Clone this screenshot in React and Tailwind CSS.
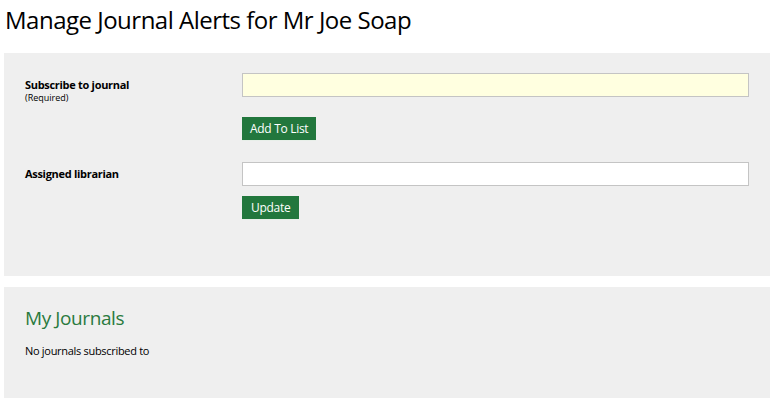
export default function App() {
  return (
    <div className="min-h-screen bg-white font-['Open_Sans',sans-serif] text-black">
      <h1 className="px-[5px] pt-[4px] text-[24px] leading-[32px] font-normal tracking-[-0.5px]">
        Manage Journal Alerts for Mr Joe Soap
      </h1>

      <div className="ml-[4px] mr-[5px] mt-[17px] bg-[#efefef] pl-[21px] pr-[21px] pt-[20px] pb-[56px]">
        {/* Subscribe row */}
        <div className="grid grid-cols-[217px_1fr]">
          <div className="pt-[4px]">
            <div className="text-[11px] font-bold leading-[15px] tracking-[-0.3px]">Subscribe to journal</div>
            <div className="text-[9px] leading-[12px]">(Required)</div>
          </div>
          <div>
            <input
              type="text"
              className="block h-[24px] w-full border border-[#c4c4c4] bg-[#ffffe0] outline-none"
            />
            <button className="mt-[20px] h-[24px] bg-[#22773d] px-[8px] text-[12px] tracking-[-0.3px] text-white border-b border-[#e8efe9]">
              Add To List
            </button>
          </div>
        </div>

        {/* Librarian row */}
        <div className="mt-[21px] grid grid-cols-[217px_1fr]">
          <div className="pt-[4px]">
            <div className="text-[11px] font-bold leading-[15px] tracking-[-0.3px]">Assigned librarian</div>
          </div>
          <div>
            <input
              type="text"
              className="block h-[24px] w-full border border-[#c4c4c4] bg-white outline-none"
            />
            <button className="mt-[10px] h-[24px] bg-[#22773d] px-[9px] text-[12px] tracking-[-0.3px] text-white border-b border-[#e8efe9]">
              Update
            </button>
          </div>
        </div>
      </div>

      <div className="ml-[4px] mr-[5px] mt-[11px] h-[111px] bg-[#efefef] pl-[21px] pt-[18px]">
        <h2 className="text-[19px] leading-[26px] font-normal tracking-[-0.4px] text-[#2a7a3e]">My Journals</h2>
        <p className="mt-[12px] text-[11px] leading-[15px] tracking-[-0.3px]">No journals subscribed to</p>
      </div>
    </div>
  );
}
